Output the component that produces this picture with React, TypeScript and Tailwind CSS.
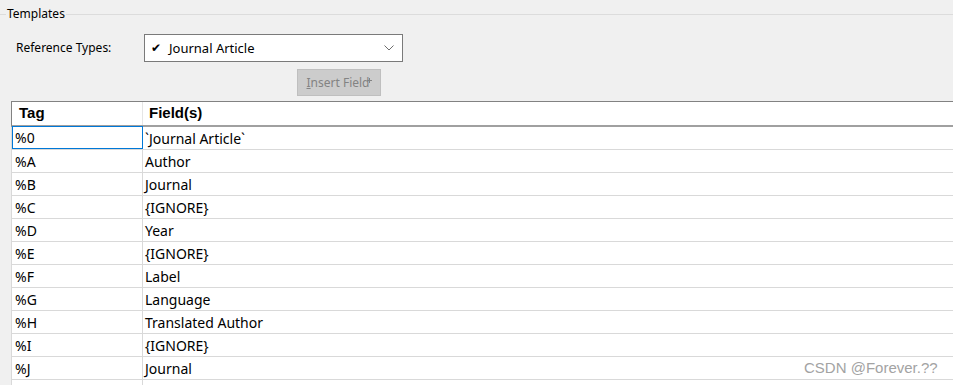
const rows: [string, string][] = [
  ["%0", "`Journal Article`"],
  ["%A", "Author"],
  ["%B", "Journal"],
  ["%C", "{IGNORE}"],
  ["%D", "Year"],
  ["%E", "{IGNORE}"],
  ["%F", "Label"],
  ["%G", "Language"],
  ["%H", "Translated Author"],
  ["%I", "{IGNORE}"],
  ["%J", "Journal"],
  ["", ""],
];

export default function App() {
  return (
    <div className="relative w-[953px] h-[385px] overflow-hidden bg-[#f0f0f0] text-black font-['Noto_Sans',sans-serif]">
      {/* group box caption */}
      <div className="flex items-center pt-[6px]">
        <span className="w-[6px] h-px bg-[#dcdcdc]" />
        <span className="px-[1px] text-[12px] leading-[16px]">Templates</span>
        <span className="flex-1 h-px bg-[#dcdcdc]" />
      </div>

      <div className="flex items-center mt-[12px]">
        <span className="ml-[16px] w-[128px] text-[12px] leading-[16px] -mt-[1px]">Reference Types:</span>
        <div className="w-[259px] h-[28px] flex items-center bg-white border border-[#7a7a7a]">
          <span className="ml-[6px] w-[18px] text-[12px]">✔</span>
          <span className="text-[13px] leading-[16px]">Journal Article</span>
          <svg className="ml-auto mr-[8px]" width="10" height="6" viewBox="0 0 10 6">
            <path d="M0.5 0.5 L5 5 L9.5 0.5" fill="none" stroke="#6d6d6d" strokeWidth="1" />
          </svg>
        </div>
      </div>

      <div className="mt-[7px] ml-[297px] w-[84px] h-[27px] flex items-center justify-center bg-[#cccccc] border border-[#bfbfbf] text-[12px] text-[#838383]">
        <span className="flex items-center">
          <span>
            <span className="underline">I</span>nsert Field
          </span>
          <svg className="-ml-[3px] -mt-[4px]" width="5" height="5" viewBox="0 0 5 5">
            <path d="M2.5 0 V5 M0 2.5 H5" stroke="#838383" strokeWidth="1" />
          </svg>
        </span>
      </div>

      <div className="mt-[5px] ml-[11px] w-[960px] bg-white">
        <div className="flex h-[26px] border-t border-b-2 border-t-[#828282] border-b-[#a0a0a0] border-l border-l-[#828282] font-['Liberation_Sans',sans-serif] font-bold text-[15px]">
          <div className="w-[131px] border-r border-[#e5e5e5] pl-[7px] flex items-center">Tag</div>
          <div className="flex-1 pl-[6px] flex items-center">Field(s)</div>
        </div>
        {rows.map(([tag, field], i) => (
          <div key={i} className="flex h-[23px] border-b border-[#d9d9d9] border-l border-l-[#d9d9d9] text-[14px] leading-[20px]">
            <div
              className={
                i === 0
                  ? "w-[131px] border border-[#0078d7] pl-[2px] pt-[1px] -mt-[1px] flex items-center"
                  : "w-[131px] border-r border-[#d9d9d9] pl-[3px] pt-[1px] flex items-center"
              }
            >
              {tag}
            </div>
            <div className="flex-1 pl-[2px] pt-[1px] flex items-center">{field}</div>
          </div>
        ))}
      </div>

      <div className="absolute left-[804px] top-[358px] text-[15px] leading-[20px] text-[#a3a3a3] font-['Liberation_Sans',sans-serif]">
        CSDN @Forever.??
      </div>
    </div>
  );
}
